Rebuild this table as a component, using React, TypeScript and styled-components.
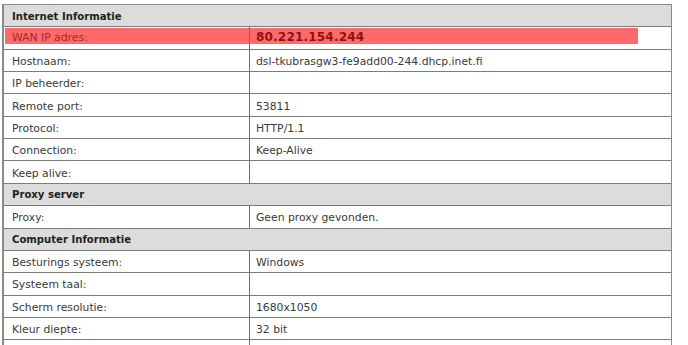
import React from "react";
import styled, { createGlobalStyle } from "styled-components";

const GlobalStyle = createGlobalStyle`
  html, body {
    margin: 0;
    padding: 0;
    background: #ffffff;
  }
  body {
    font-family: "DejaVu Sans", Verdana, sans-serif;
    font-size: 11px;
    color: #333333;
  }
`;

const Page = styled.div`
  padding: 4px 0 0 2px;
  width: 688px;
  height: 345px;
  box-sizing: border-box;
  overflow: hidden;
`;

const Table = styled.div`
  width: 670px;
  border: 1px solid #8a8a8a;
  border-left-width: 2px;
  border-bottom: none;
  box-sizing: border-box;
`;

const SectionHeader = styled.div`
  height: 22.4px;
  display: flex;
  align-items: center;
  padding: 1px 0 0 8px;
  background: #dcdcdc;
  border-bottom: 1px solid #7c7c7c;
  box-sizing: border-box;
  font-weight: bold;
  color: #222222;
  font-size: 10.1px;
`;

const Row = styled.div`
  position: relative;
  height: 22.35px;
  display: grid;
  grid-template-columns: 245px 1fr;
  border-bottom: 1px solid #7c7c7c;
  box-sizing: border-box;
`;

const Cell = styled.div<{ $value?: boolean }>`
  display: flex;
  align-items: center;
  padding: 2px 0 0 ${(p) => (p.$value ? "6px" : "8px")};
  border-left: ${(p) => (p.$value ? "1px solid #6e6e6e" : "none")};
  white-space: nowrap;
  overflow: hidden;
  color: #3a3a3a;
  font-size: 10.8px;
  position: relative;
`;

const Highlight = styled.div`
  position: absolute;
  left: 1px;
  top: 1px;
  width: 633px;
  height: 16px;
  background: rgba(255, 80, 80, 0.86);
`;

const WanLabel = styled.span`
  position: relative;
  color: #a12a2a;
  margin-top: -4px;
`;

const WanValue = styled.span`
  position: relative;
  color: #8b1414;
  font-weight: bold;
  font-size: 12px;
  letter-spacing: 0.2px;
  margin-top: -4px;
`;

type Item = { label: string; value?: string };

const internet: Item[] = [
  { label: "Hostnaam:", value: "dsl-tkubrasgw3-fe9add00-244.dhcp.inet.fi" },
  { label: "IP beheerder:" },
  { label: "Remote port:", value: "53811" },
  { label: "Protocol:", value: "HTTP/1.1" },
  { label: "Connection:", value: "Keep-Alive" },
  { label: "Keep alive:" },
];

const computer: Item[] = [
  { label: "Besturings systeem:", value: "Windows" },
  { label: "Systeem taal:" },
  { label: "Scherm resolutie:", value: "1680x1050" },
  { label: "Kleur diepte:", value: "32 bit" },
  { label: "Browser:", value: "Mozilla/5.0 (Windows NT 6.1; WOW64) AppleWebKit/537.36" },
];

function InfoRow({ label, value }: Item) {
  return (
    <Row>
      <Cell>{label}</Cell>
      <Cell $value>{value}</Cell>
    </Row>
  );
}

export default function App() {
  return (
    <>
      <GlobalStyle />
      <Page>
        <Table>
          <SectionHeader>Internet Informatie</SectionHeader>
          <Row>
            <Highlight />
            <Cell>
              <WanLabel>WAN IP adres:</WanLabel>
            </Cell>
            <Cell $value>
              <WanValue>80.221.154.244</WanValue>
            </Cell>
          </Row>
          {internet.map((it) => (
            <InfoRow key={it.label} {...it} />
          ))}
          <SectionHeader>Proxy server</SectionHeader>
          <InfoRow label="Proxy:" value="Geen proxy gevonden." />
          <SectionHeader>Computer Informatie</SectionHeader>
          {computer.map((it) => (
            <InfoRow key={it.label} {...it} />
          ))}
        </Table>
      </Page>
    </>
  );
}
